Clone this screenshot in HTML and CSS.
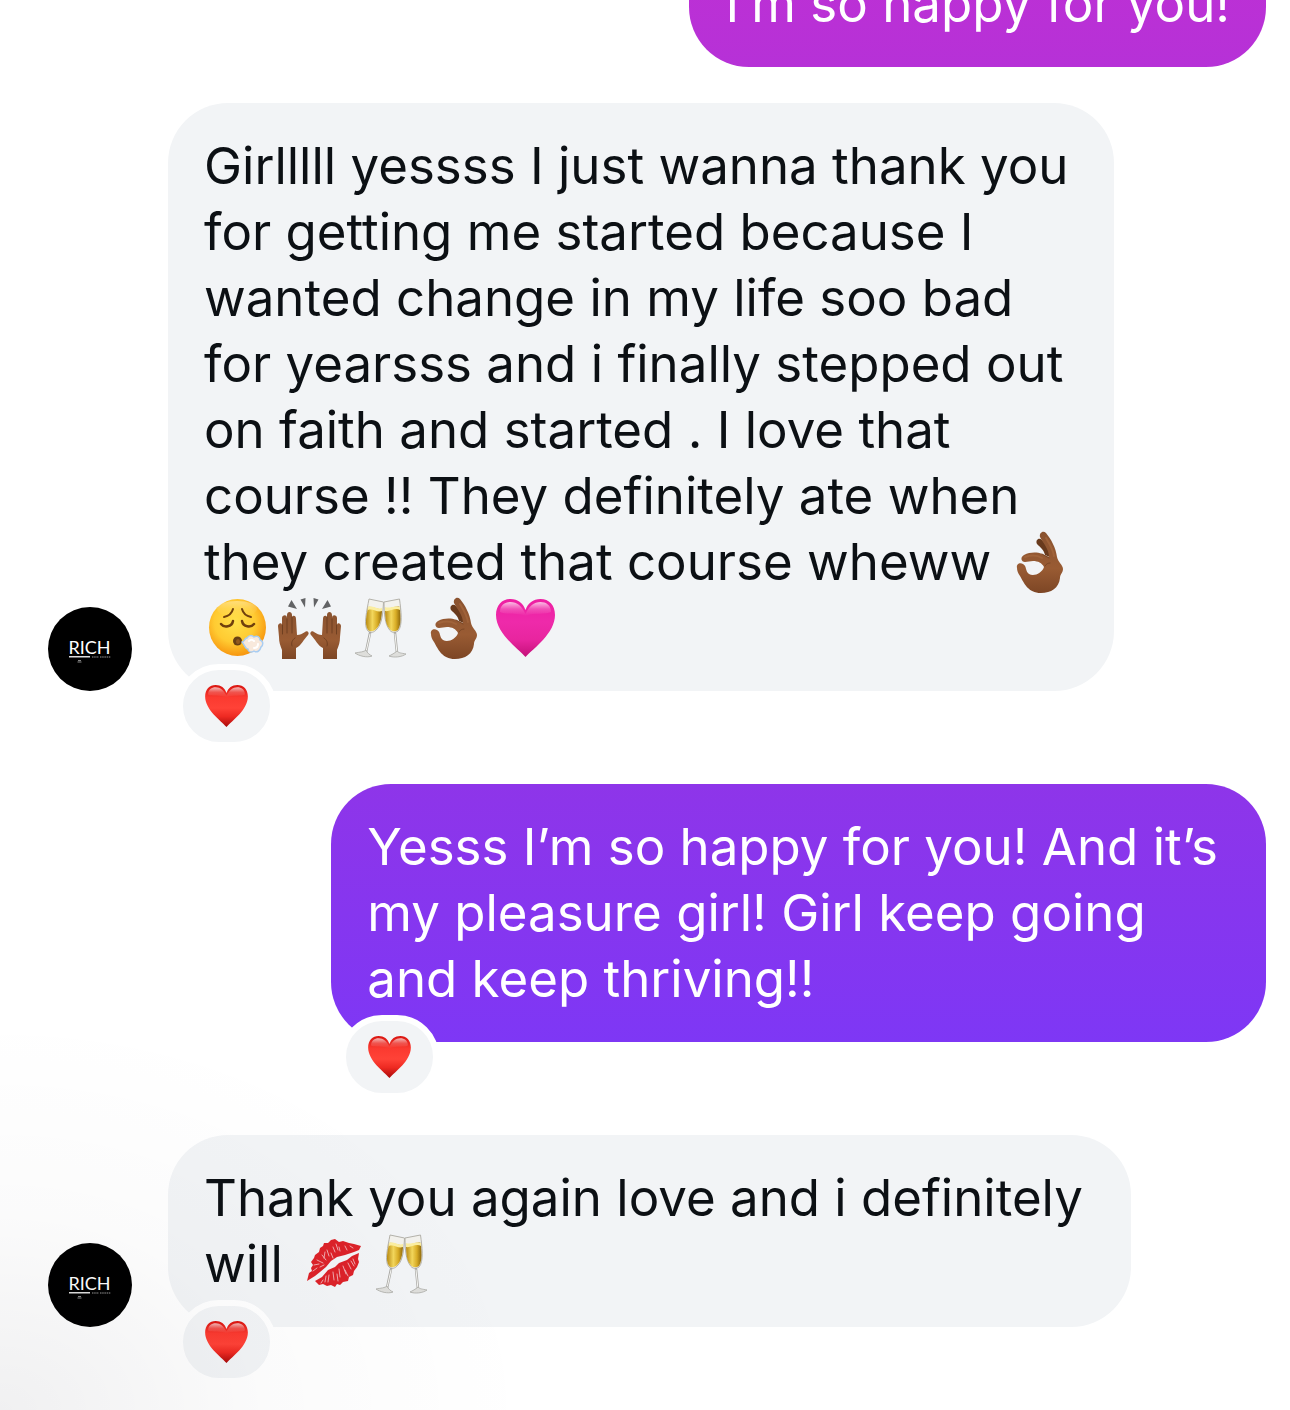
FILE: index.html
```html
<!DOCTYPE html>
<html lang="en">
<head>
    <meta charset="UTF-8">
    <meta name="viewport" content="width=device-width, initial-scale=1.0">
    <title>Chat</title>
    <link rel="stylesheet" href="styles.css">
</head>
<body>
    <!-- Shared emoji and avatar shapes -->
    <svg class="sprites" width="0" height="0" aria-hidden="true">
        <defs>
            <linearGradient id="redFill" x1="0" y1="0" x2="0" y2="1">
                <stop offset="0" stop-color="#d9140f"/>
                <stop offset="0.3" stop-color="#fb3a30"/>
                <stop offset="0.55" stop-color="#ff4237"/>
                <stop offset="0.75" stop-color="#ee2a22"/>
                <stop offset="1" stop-color="#a80a0a"/>
            </linearGradient>
            <linearGradient id="pinkFill" x1="0" y1="0" x2="0" y2="1">
                <stop offset="0" stop-color="#ee1fa2"/>
                <stop offset="0.4" stop-color="#ee2aaa"/>
                <stop offset="0.7" stop-color="#e8259f"/>
                <stop offset="1" stop-color="#c41078"/>
            </linearGradient>
            <linearGradient id="shine" x1="0" y1="0" x2="0" y2="1">
                <stop offset="0" stop-color="#fff" stop-opacity="0.7"/>
                <stop offset="0.5" stop-color="#fff" stop-opacity="0.2"/>
                <stop offset="1" stop-color="#fff" stop-opacity="0"/>
            </linearGradient>
            <radialGradient id="faceFill" cx="0.45" cy="0.4" r="0.6">
                <stop offset="0" stop-color="#ffe04a"/>
                <stop offset="0.6" stop-color="#ffcb32"/>
                <stop offset="1" stop-color="#f7960f"/>
            </radialGradient>
            <linearGradient id="skinFill" x1="0" y1="0" x2="0" y2="1">
                <stop offset="0" stop-color="#8a5330"/>
                <stop offset="0.6" stop-color="#995b33"/>
                <stop offset="1" stop-color="#7d4625"/>
            </linearGradient>
            <linearGradient id="wineFill" x1="0" y1="0" x2="1" y2="0">
                <stop offset="0" stop-color="#b88a12"/>
                <stop offset="0.4" stop-color="#f3d75c"/>
                <stop offset="0.7" stop-color="#d9ad26"/>
                <stop offset="1" stop-color="#8f690c"/>
            </linearGradient>

            <symbol id="heart" viewBox="4 4 59 58">
                <path d="M33.5 62C25 53 4 38 4 20C4 10 10 4 18.500 4C26 4 31 8 33.500 15C36 8 41 4 48.500 4C57 4 63 10 63 20C63 38 42 53 33.500 62Z"/>
                <path fill="url(#shine)" d="M8 17C8 10 13 7 18.500 7C25 7 30 11 33.500 19C37 11 42 7 48.500 7C54 7 59 10 59 17C54 20 42 17 33.500 21C25 17 13 20 8 17Z"/>
            </symbol>

            <symbol id="ok" viewBox="0 0 72 66">
                <path fill="#683a1d" d="M31 15C29 11 33 8 36 11C40 15 45 22 46 29L39 26C38 21 34 18 31 15Z"/>
                <path fill="url(#skinFill)" d="M11 39C10 35 14 33 17 35C21 37 19 42 23 45C28 48 36 44 38 38C36 34 32 32 27 32L19 33C15 33 14 28 18 26C24 23 31 23 36 25L43 28C43 20 37 14 34 8C33 4 37 1 40 4C45 10 50 19 51 28C52 33 57 36 57 40C57 44 54 45 54 49C53 59 45 64 35 64C22 64 18 54 14 47C12 44 11 42 11 39Z"/>
                <path fill="none" stroke="#7a4726" stroke-width="1" stroke-linecap="round" d="M36 25L43 29M39 37C40 35 42 34 44 34"/>
                <path fill="none" stroke="#a0633a" stroke-width="2" stroke-linecap="round" d="M19 28C25 26 31 26 36 29M40 9C43 14 47 20 48 27"/>
            </symbol>

            <g id="raisedHand">
                <path fill="url(#skinFill)" d="M6 64L6 55C4 50 3 47 3 42L2 31C2 28 6 27 6 30L6 23C6 20 11 19 11 23L11 20C11 16 16 16 16 20L16 22C17 20 20 20 20 24L21 40C24 40 26 39 29 37C31 35 34 38 32 40C28 44 25 51 20 53L20 64Z"/>
                <path fill="none" stroke="#6f3f20" stroke-width="1" stroke-linecap="round" d="M6.500 30V39M11 24V38M16 22V38M19 43C16 45 15 48 16 51"/>
                <path fill="#626365" d="M15.500 5L12 11.500L21 14ZM24.500 4.500L29.500 3L29 12.500Z"/>
            </g>
            <symbol id="hands" viewBox="0 0 72 66">
                <use href="#raisedHand"/>
                <use href="#raisedHand" transform="translate(67 0) scale(-1 1)"/>
            </symbol>

            <symbol id="exhale" viewBox="0 0 72 66">
                <circle cx="33.500" cy="32.500" r="28.500" fill="url(#faceFill)"/>
                <ellipse cx="33" cy="14" rx="20" ry="8" fill="url(#shine)" opacity="0.5"/>
                <g fill="none" stroke="#70400d" stroke-linecap="round">
                    <path stroke-width="2" d="M20 22C25 21 28 18 29 14M47 22C42 21 39 18 38 14"/>
                    <path stroke-width="2.500" d="M17 29C20 33 28 32 29 26M50 29C47 33 39 32 38 26"/>
                </g>
                <ellipse cx="33.500" cy="46" rx="4.500" ry="4.500" fill="#694014"/>
                <ellipse cx="34" cy="46.500" rx="2" ry="2.500" fill="#93591e"/>
                <path fill="#f8e9dc" stroke="#a8cdf3" stroke-width="1.500" stroke-linejoin="round" d="M38 47C41 47 40 43 43 43C45 40 48 40 50 42C53 40 56 42 56 45C60 46 59 51 57 52C56 56 53 58 50 56C47 58 44 57 44 54C41 54 41 50 38 47Z"/>
                <path fill="none" stroke="#fff" stroke-width="2" stroke-linecap="round" d="M45 46C47 44 49 45 50 46M50 53C53 53 54 51 54 49"/>
            </symbol>

            <symbol id="cheers" viewBox="0 0 72 66">
                <g fill="#f3f2ed" stroke="#b4b2aa" stroke-width="1">
                    <path d="M21 4L35.500 7C35 18 34 29 29 34C26 38 22 38 20 36C15 31 19 15 21 4Z"/>
                    <path d="M51.500 4L36 7C36 18 37 29 41 34C43 38 47 38 50 36C55 31 53 15 51.500 4Z"/>
                </g>
                <path fill="url(#wineFill)" d="M20 12C25 11 30 15 34 14C34 23 32 30 29 33C26 37 22 37 20 35C16 29 19 19 20 12Z"/>
                <path fill="url(#wineFill)" d="M52 12C47 10 41 15 37 13C37 23 38 30 41 33C43 37 47 37 50 35C54 29 52 19 52 12Z"/>
                <path fill="#fbeea0" d="M20 12C25 10 30 15 34 13L34 16C29 18 25 13 20 15ZM52 12C47 10 41 14 37 12L37 16C42 17 47 12 52 15Z"/>
                <g fill="none" stroke-linecap="round">
                    <path stroke="#aaa9a5" stroke-width="2.500" d="M22 38L18 57M47 38L49 58"/>
                    <path stroke="#f7f7f4" stroke-width="1" d="M22 39L18 57M47 39L49 58"/>
                </g>
                <path fill="#dededb" stroke="#aaa9a5" stroke-width="0.800" d="M7 58C12 57 16 57 18 55C19 58 22 60 24 61C19 63 11 61 7 58ZM58 59C53 58 51 58 49 56C47 58 43 60 41 61C46 63 54 62 58 59Z"/>
            </symbol>

            <symbol id="kiss" viewBox="0 0 72 66">
                <path fill="#dc2229" d="M10 50L12 42L15 40L14 37L16 34L14 31L17 27L18 24L22 21L23 17L26 15L27 12L31 12L34 9L38 8L42 11L46 10L52 12L57 13L64 15L62 19L57 21L48 24L40 26L34 30L29 36L23 41L18 45Z"/>
                <path fill="#dc2229" d="M18 50L25 46L31 39L38 36L42 32L50 29L55 25L62 22L61 28L62 31L60 36L57 40L56 44L52 46L51 50L46 51L43 54L40 53L38 56L34 54L30 55L26 53L22 54Z"/>
                <g fill="none" stroke="#f3c9cd" stroke-width="0.800" stroke-linecap="round">
                    <path d="M16 40L20 37M17 34L22 33M20 29L26 32M25 24L29 29M30 19L32 25M36 16L38 21M42 16L43 20M48 15L50 19M53 15L56 17M23 36L27 34M34 22L36 27M28 21L27 27M39 13L41 19"/>
                    <path d="M26 49L24 52M32 44L31 51M36 41L37 49M42 38L43 46M46 35L49 43M51 32L54 38M56 28L58 33M40 43L41 50M29 45L28 51M48 39L51 45M54 30L57 35"/>
                </g>
            </symbol>

            <symbol id="logo" viewBox="0 0 84 84">
                <rect width="84" height="84" fill="#000"/>
                <text x="41.500" y="47" text-anchor="middle" class="logo-text">RICH</text>
                <rect x="21" y="49" width="21" height="1.500" fill="#ddd"/>
                <path d="M44 50H51M52 50H63" stroke="#666" stroke-width="1.500" stroke-dasharray="1.500 0.700"/>
                <path d="M30 53.500H33M29.500 55H33.500" stroke="#888" stroke-width="1"/>
            </symbol>
        </defs>
    </svg>

    <main class="chat">
        <div class="message sent">
            <div class="bubble magenta">I’m so happy for you!</div>
        </div>

        <div class="message received">
            <svg class="avatar" role="img" aria-label="Rich"><use href="#logo"/></svg>
            <div class="bubble">
                Girlllll yessss I just wanna thank you<br>
                for getting me started because I<br>
                wanted change in my life soo bad<br>
                for yearsss and i finally stepped out<br>
                on faith and started . I love that<br>
                course !! They definitely ate when<br>
                they created that course wheww <svg class="emoji" role="img" aria-label="OK hand"><use href="#ok"/></svg><br>
                <svg class="emoji" role="img" aria-label="Face exhaling"><use href="#exhale"/></svg><svg class="emoji" role="img" aria-label="Raising hands"><use href="#hands"/></svg><svg class="emoji" role="img" aria-label="Clinking glasses"><use href="#cheers"/></svg><svg class="emoji" role="img" aria-label="OK hand"><use href="#ok"/></svg><svg class="emoji" role="img" aria-label="Pink heart"><use href="#heart" class="pink-heart" x="4" y="4" width="59" height="58"/></svg>
                <button class="reaction" aria-label="Heart reaction"><svg class="red-heart"><use href="#heart"/></svg></button>
            </div>
        </div>

        <div class="message sent reacted">
            <div class="bubble violet wide">
                Yesss I’m so happy for you! And it’s<br>
                my pleasure girl! Girl keep going<br>
                and keep thriving!!
                <button class="reaction" aria-label="Heart reaction"><svg class="red-heart"><use href="#heart"/></svg></button>
            </div>
        </div>

        <div class="message received reacted">
            <svg class="avatar" role="img" aria-label="Rich"><use href="#logo"/></svg>
            <div class="bubble wide">
                Thank you again love and i definitely<br>
                will <svg class="emoji" role="img" aria-label="Kiss mark"><use href="#kiss"/></svg><svg class="emoji" role="img" aria-label="Clinking glasses"><use href="#cheers"/></svg>
                <button class="reaction" aria-label="Heart reaction"><svg class="red-heart"><use href="#heart"/></svg></button>
            </div>
        </div>
    </main>
</body>
</html>
```

FILE: styles.css
```css
body {
    font-family: Inter, "Liberation Sans", sans-serif;
    background-color: #fff;
    color: #0c1014;
    margin: 0;
}

.sprites {
    position: absolute;
}

/* The log is scrolled to its end, older messages run off the top */
.chat {
    position: relative;
    display: flex;
    flex-direction: column;
    justify-content: flex-end;
    height: 100vh;
    padding: 0 24px 83px 48px;
    box-sizing: border-box;
    overflow: hidden;
}

/* Soft shade in the bottom left corner */
.chat::after {
    content: "";
    position: absolute;
    inset: 0;
    background: radial-gradient(540px 400px at 0 100%, rgba(0, 0, 20, 0.06), rgba(0, 0, 20, 0.015) 50%, transparent);
    pointer-events: none;
}

.message {
    display: flex;
    flex-shrink: 0;
    align-items: flex-end;
    gap: 36px;
    margin-top: 36px;
}

.message.reacted {
    margin-top: 93px;
}

.sent {
    justify-content: flex-end;
}

.avatar {
    flex-shrink: 0;
    width: 84px;
    height: 84px;
    border-radius: 50%;
}

.logo-text {
    font-family: Lato, sans-serif;
    font-size: 18px;
    fill: #fff;
}

.bubble {
    position: relative;
    padding: 30px 36px;
    border-radius: 60px;
    background-color: #f2f4f6;
    font-size: 51px;
    line-height: 66px;
}

.bubble.wide {
    padding-right: 48px;
}

.magenta {
    background: linear-gradient(#bf30d4, #b631d7);
    color: #fff;
}

.violet {
    background: linear-gradient(#8e35e9, #7e37f5);
    color: #fff;
}

.emoji {
    width: 72px;
    height: 66px;
    vertical-align: top;
}

.pink-heart {
    fill: url(#pinkFill);
}

.reaction {
    position: absolute;
    left: 9px;
    bottom: -57px;
    display: flex;
    justify-content: center;
    align-items: center;
    width: 99px;
    height: 84px;
    padding: 0;
    border: 6px solid #fff;
    border-radius: 42px;
    background-color: #f2f4f6;
    cursor: pointer;
}

.red-heart {
    width: 43px;
    height: 42px;
    fill: url(#redFill);
}
```
